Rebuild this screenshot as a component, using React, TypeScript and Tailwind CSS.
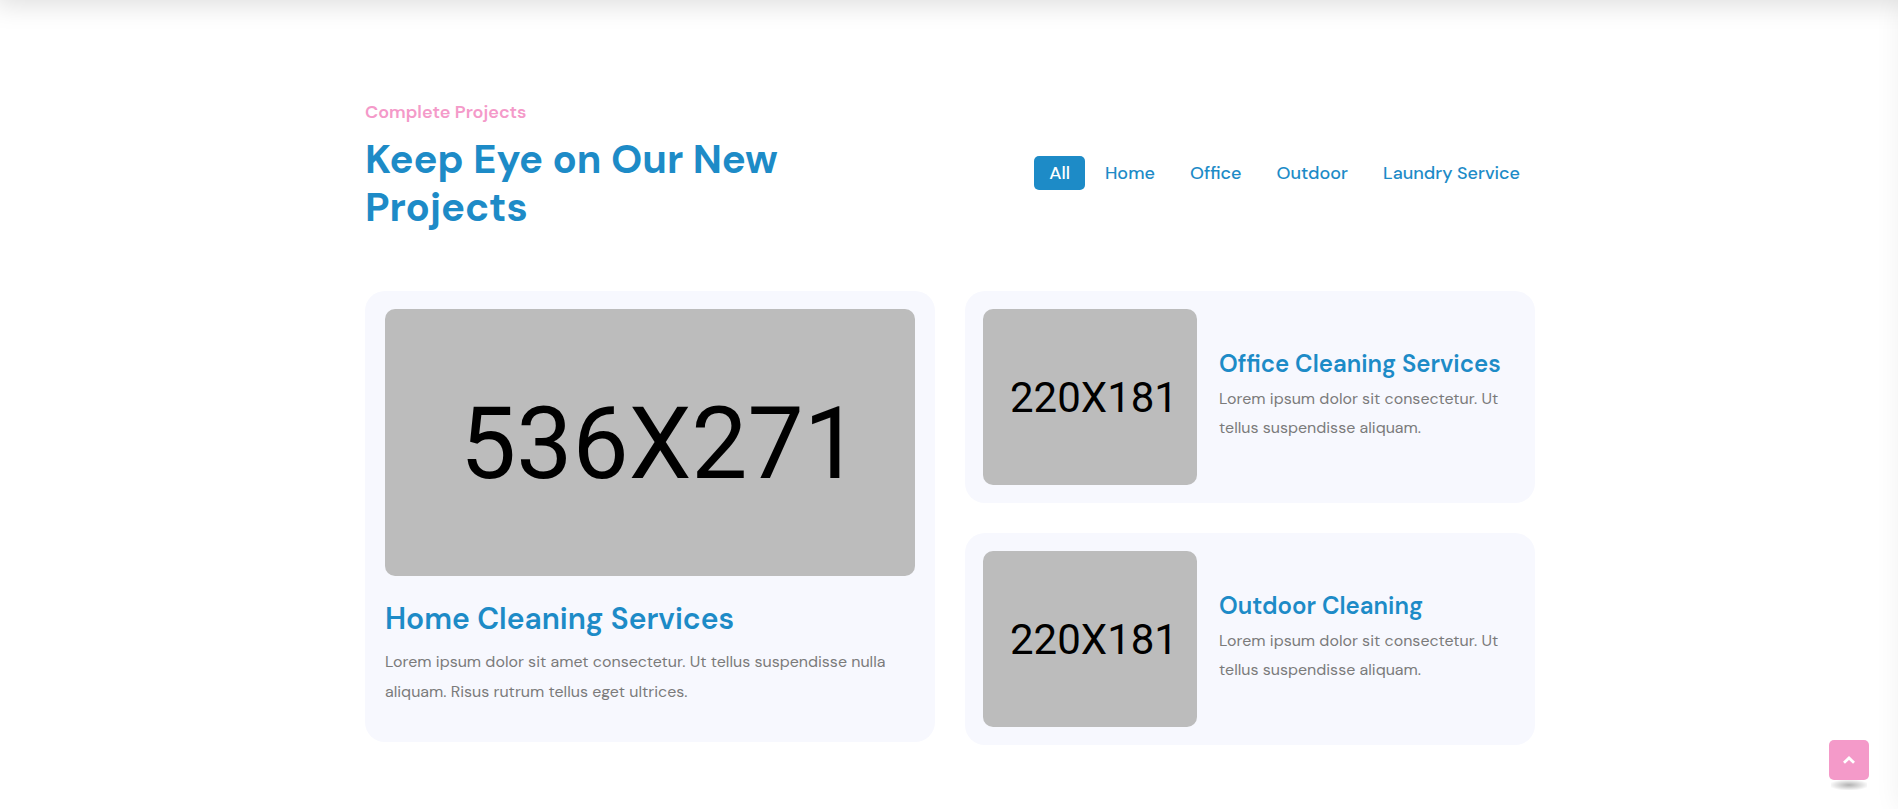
import { useState } from "react";

const filters = ["All", "Home", "Office", "Outdoor", "Laundry Service"];

const sideProjects = [
  { title: "Office Cleaning Services", text: "Lorem ipsum dolor sit consectetur. Ut tellus suspendisse aliquam." },
  { title: "Outdoor Cleaning", text: "Lorem ipsum dolor sit consectetur. Ut tellus suspendisse aliquam." },
];

export default function App() {
  const [active, setActive] = useState("All");

  return (
    <div className="relative min-h-screen overflow-hidden bg-white font-['DM_Sans',Inter,sans-serif] text-[#7b7b7b]">
      <div aria-hidden="true" className="absolute bottom-full left-0 h-20 w-[110%] shadow-[0_0_25px_5px_rgba(0,0,0,0.13)]" />
      <div aria-hidden="true" className="absolute inset-y-0 left-full w-20 shadow-[0_0_25px_0_rgba(0,0,0,0.06)]" />

      <main className="mx-auto max-w-[1200px] pt-[97px] pr-[14px] pb-16 pl-4">
        <header className="flex items-center justify-between gap-8">
          <div className="max-w-[470px]">
            <p className="text-[18px] leading-[30px] font-semibold text-[#f49ac9]">Complete Projects</p>
            <h2 className="mt-2 text-[40px] leading-[48px] font-bold text-[#1d8bc7]">Keep Eye on Our New Projects</h2>
          </div>
          <nav aria-label="Project filter" className="flex gap-[5px] pt-[18px]">
            {filters.map((name) => (
              <button
                key={name}
                type="button"
                aria-pressed={active === name}
                onClick={() => setActive(name)}
                className={
                  "h-[34px] rounded-[5px] px-[15px] text-[18px] font-medium " +
                  (active === name ? "bg-[#1d8bc7] text-white" : "text-[#1d8bc7]")
                }
              >
                {name}
              </button>
            ))}
          </nav>
        </header>

        <div className="mt-[60px] grid grid-cols-2 items-start gap-[30px]">
          <article className="rounded-[20px] bg-[#f7f8fe] px-5 pt-[18px] pb-[35px]">
            <div className="flex h-[267px] items-center justify-center rounded-[10px] bg-[#bcbcbc] pt-[2px] pl-5 font-[Roboto,sans-serif] text-[100px] leading-none text-black">
              536X271
            </div>
            <h3 className="mt-6 text-[30px] leading-[38px] font-semibold text-[#1d8bc7]">Home Cleaning Services</h3>
            <p className="mt-[9px] text-[16px] leading-[30px]">
              Lorem ipsum dolor sit amet consectetur. Ut tellus suspendisse nulla aliquam. Risus rutrum tellus eget ultrices.
            </p>
          </article>

          <div className="grid gap-[30px]">
            {sideProjects.map((project) => (
              <article key={project.title} className="flex items-center gap-[22px] rounded-[20px] bg-[#f7f8fe] p-[18px]">
                <div className="flex h-[176px] w-[214px] shrink-0 items-center justify-center rounded-[10px] bg-[#bcbcbc] pt-[2px] pl-2 font-[Roboto,sans-serif] text-[42px] leading-none text-black">
                  220X181
                </div>
                <div className="pb-1">
                  <h3 className="text-[24px] leading-[29px] font-semibold text-[#1d8bc7]">{project.title}</h3>
                  <p className="mt-[6px] text-[16px] leading-[29px]">{project.text}</p>
                </div>
              </article>
            ))}
          </div>
        </div>
      </main>

      <a
        href="#top"
        aria-label="Back to top"
        className="fixed right-[29px] bottom-[29px] flex size-10 items-center justify-center rounded-[5px] bg-[#f49ac9] text-white"
      >
        <svg viewBox="0 0 12 8" className="h-2 w-3" fill="none" stroke="currentColor" strokeWidth="2.8" aria-hidden="true">
          <path d="M2 5.8 6 2l4 3.8" strokeLinejoin="miter" strokeLinecap="square" />
        </svg>
        <span
          aria-hidden="true"
          className="absolute top-full left-[5%] h-[10px] w-[90%] bg-[radial-gradient(ellipse_at_center,rgba(0,0,0,0.3)_0%,rgba(0,0,0,0)_80%)]"
        />
      </a>
    </div>
  );
}
